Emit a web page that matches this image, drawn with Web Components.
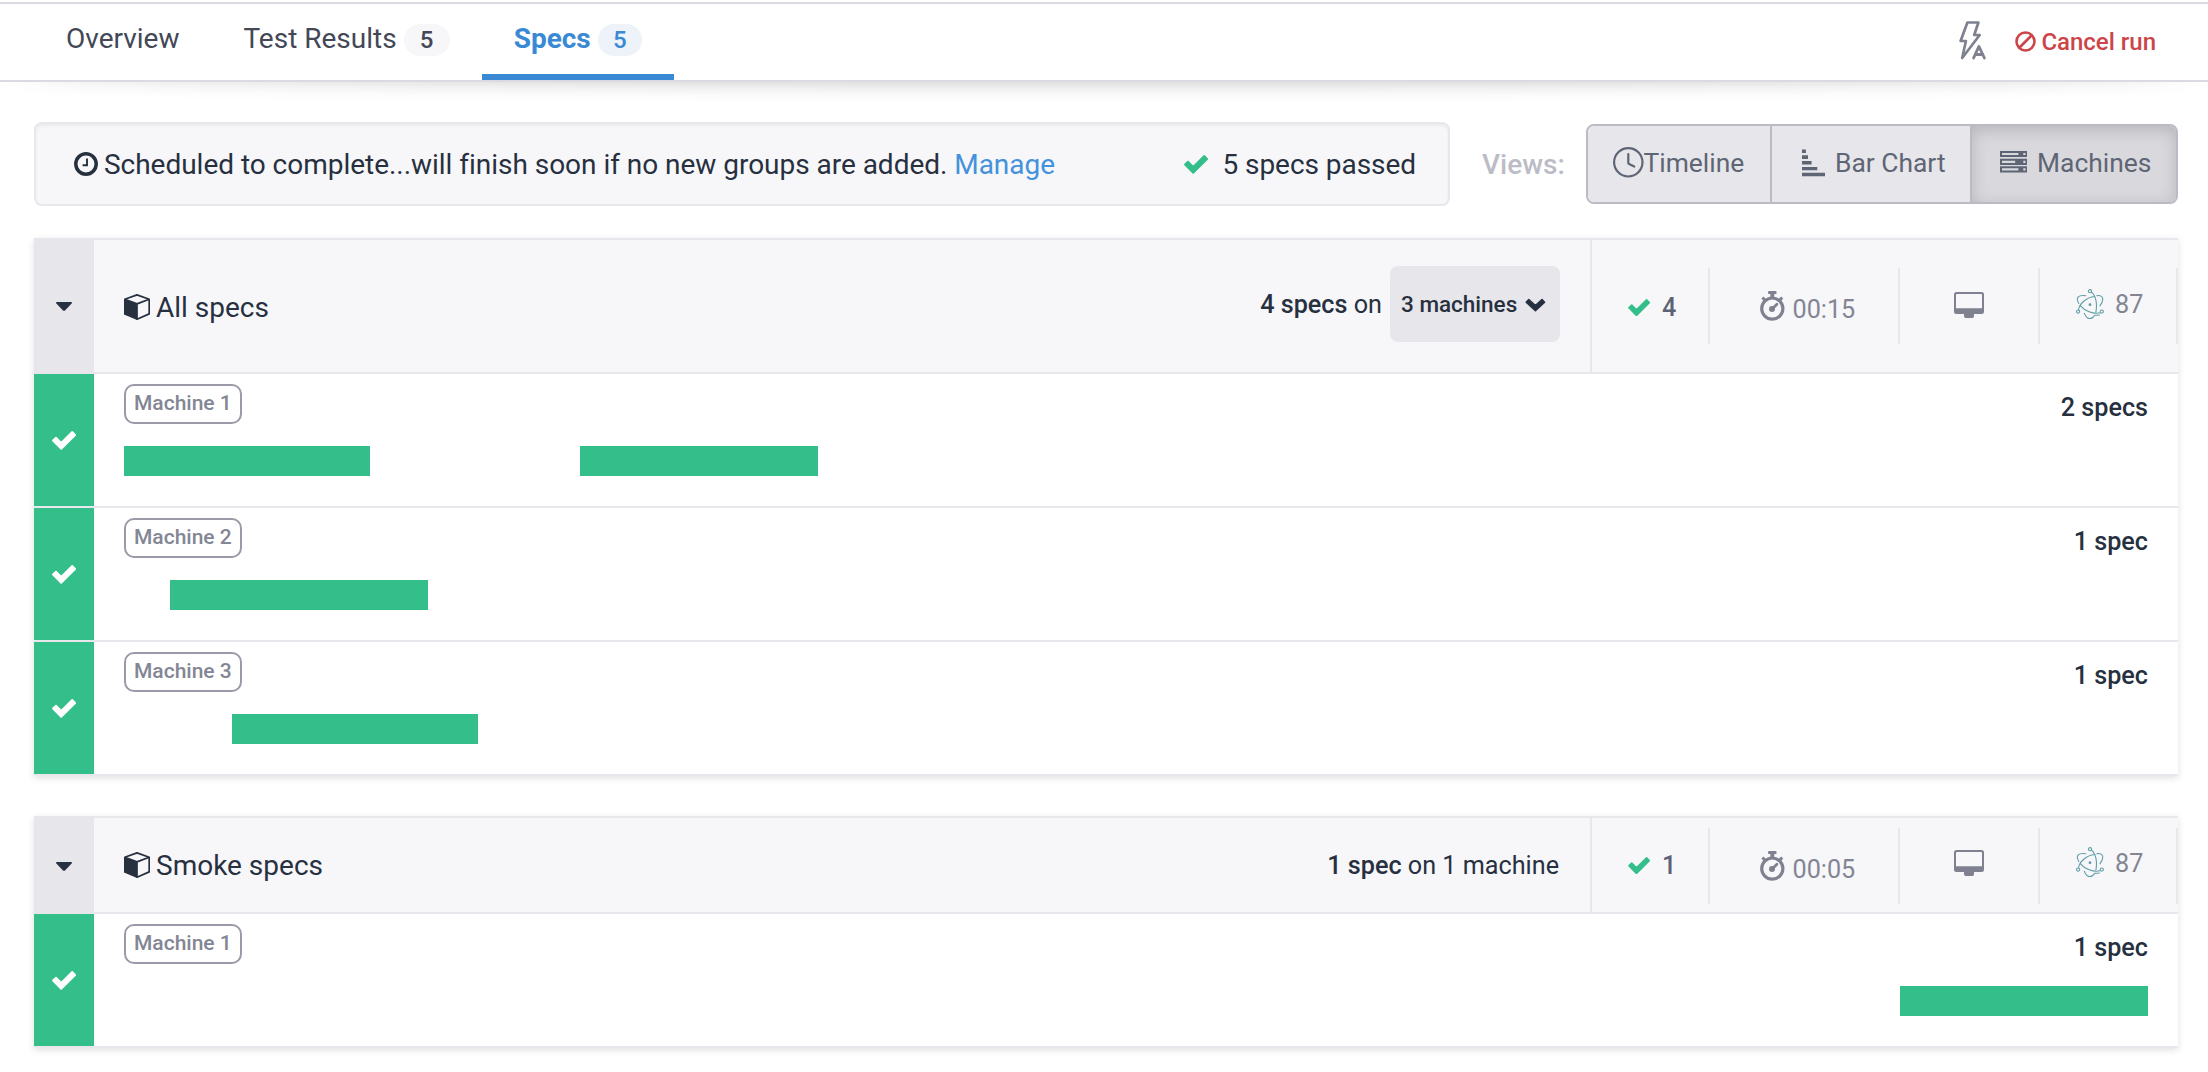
<!DOCTYPE html>
<html lang="en">
<head>
<meta charset="utf-8">
<title>Specs</title>
<style>
body{margin:0;background:#fff;color:#27303f;font-family:Roboto,"Liberation Sans",sans-serif;font-size:28px;-webkit-font-smoothing:antialiased}
</style>
</head>
<body>
<run-page></run-page>
<script>
const define=(name,html,setup)=>{
  const t=document.createElement('template');
  t.innerHTML=html;
  customElements.define(name,class extends HTMLElement{
    constructor(){super();this.attachShadow({mode:'open'}).append(t.content.cloneNode(true));}
    connectedCallback(){if(setup)setup(this,this.shadowRoot);}
  });
};
const icons={
  check:[24,19,'<path fill="currentColor" stroke="currentColor" stroke-width="1.8" stroke-linejoin="round" d="M1 9.5 4 6.6l5.2 5.3L20.2 1l2.9 3L9.2 17.9z"/>'],
  chevron:[21,14,'<path fill="currentColor" stroke="currentColor" stroke-width="1.6" stroke-linejoin="round" d="M1.2 4.2 3.8 1.5l6.6 6 6.6-6 2.6 2.7-9.2 8.4z"/>'],
  caret:[16,9,'<path fill="currentColor" d="M1 0h14q1.6 0 .6 1.4L9 8.4q-1 .9-2 0L.4 1.4Q-.6 0 1 0z"/>'],
  clock:[24,24,'<circle cx="12" cy="12" r="10.2" fill="none" stroke="currentColor" stroke-width="3.5"/><path d="M13 6.5v6.8H8.6" fill="none" stroke="currentColor" stroke-width="1.9"/>'],
  time:[31,31,'<circle cx="15.3" cy="15.3" r="14.2" fill="none" stroke="currentColor" stroke-width="2.2"/><path d="M15.3 7.2v8.6q0 .9.9 1.3l5 2.5" fill="none" stroke="currentColor" stroke-width="2.2" stroke-linecap="round"/>'],
  bars:[23,28,'<path fill="currentColor" d="M0 .6h3.9v3.3H0zM0 6.3h6V10H0zM0 12h9.6v3.5H0zM0 17.9h15.3v3.4H0zM0 23.7h23V27.200H0z"/>'],
  servers:[27,22,'<path fill="currentColor" fill-rule="evenodd" d="M0 0h27v6.100H0zm2 2v2h16.400V2zm21.300 0v2.100h2.200V2zM0 7.700h27v6.200H0zm2 2v2.200h13.200V9.700zm21.300 0v2.200h2.200V9.700zM0 15.300h27v6.100H0zm2 2v2.100h16.400v-2.100zm21.300 0v2.100h2.200v-2.100z"/>'],
  ban:[21,21,'<circle cx="10.500" cy="10.500" r="9" fill="none" stroke="currentColor" stroke-width="2.600"/><path d="M4.500 16.500l12-12" stroke="currentColor" stroke-width="2.600"/>'],
  bolt:[28,39,'<g fill="none" stroke="currentColor" stroke-width="2.700" stroke-linejoin="round" stroke-linecap="round"><path d="M8.400 1.500h11L15.200 14h5.500L3.200 37l3.700-17H1.600z"/><path stroke-width="2.800" d="M14.600 37l5.300-11.600L25.400 37M16.300 33.500h7.600"/></g>'],
  cube:[26,26,'<path fill="currentColor" d="M0 5.300 13 9.800V26L0 20.400z"/><path fill="none" stroke="currentColor" stroke-width="1.700" stroke-linejoin="round" d="M.8 5.300 13 .9l12.200 4.400v14.600L13 25.200V9.900zM13 9.900l12.200-4.600"/>'],
  stopwatch:[25,30,'<circle cx="12.300" cy="17.600" r="10.600" fill="none" stroke="currentColor" stroke-width="3.200"/><path fill="currentColor" d="M9 0h6.600q.9 0 .9.900v1.300q0 .9-.9.900H14.300V7H10.300V3.100H9q-.9 0-.9-.900V.9Q8.100 0 9 0zM1.400 7.500l2-2 3.300 3.200-2.400 2.400zM23.200 7.500l-2-2-3.300 3.200 2.400 2.400z"/><circle cx="12" cy="18" r="3" fill="currentColor"/><path d="M12.300 17.700l4.600-4.400" stroke="currentColor" stroke-width="2.800" stroke-linecap="round"/>'],
  monitor:[30,26,'<path fill="currentColor" fill-rule="evenodd" d="M2.500 0h25Q30 0 30 2.500v17q0 2.500-2.500 2.500H20v2q0 2-1.500 2h-7Q10 26 10 24v-2H2.500Q0 22 0 19.500v-17Q0 0 2.500 0zM2 2.800v13.400h26V2.800q0-.8-.8-.8H2.800q-.8 0-.8.800z"/>'],
  electron:[28,30,'<g fill="none" stroke="currentColor" stroke-width="1.100" stroke-linecap="round"><circle cx="14" cy="2.200" r="1.600"/><circle cx="2.100" cy="22.600" r="1.600"/><circle cx="25.800" cy="22.600" r="1.600"/><path d="M15.500 3.200C20 6.500 21.400 15 19.900 23M9.800 6.700C2.500 5.500-.8 8.700 2.800 14.500M2.600 20.600C3.400 14.300 11 8.200 18.600 7.500M4 16.300C8.500 21.700 17 25.500 24.200 23.800M21 6.600c6.300-.6 7.600 4.200 2.900 10.200M8.300 24.200C10.500 30.800 15.700 31.300 18.700 26.300q2.700 0 4.800-.3"/></g><circle cx="14" cy="15.700" r="1.400" fill="currentColor"/>']
};
define('ui-icon','',(h,r)=>{
  const [w,ht,body]=icons[h.getAttribute('name')],k=+(h.getAttribute('scale')||1);
  r.innerHTML=`<style>:host{display:block;flex:none}svg{display:block}</style><svg width="${w*k}" height="${ht*k}" viewBox="0 0 ${w} ${ht}">${body}</svg>`;
});
const placeIcon=(r,name,scale,tint)=>{
  const i=document.createElement('ui-icon');
  i.setAttribute('name',name);
  if(scale)i.setAttribute('scale',scale);
  if(tint)i.style.color=tint;
  r.querySelector('i').replaceWith(i);
};
define('nav-tab',`<style>
:host{display:flex;box-sizing:border-box;height:76px;padding:16px 32px 0;gap:7px;color:#434857;white-space:nowrap;border-bottom:6px solid transparent}
.label{line-height:38px}
.count{box-sizing:border-box;height:32px;margin-top:4px;min-width:46px;border-radius:16px;background:#f7f7fa;font-size:24px;font-weight:500;line-height:32px;text-align:center}
:host([active]){color:#3989d4;border-color:#3989d4}
:host([active]) .label{font-weight:700}
:host([active]) .count{background:#eef3f9;min-width:44px}
</style><span class="label"><slot></slot></span>`,(h,r)=>{
  if(h.hasAttribute('count')){const c=document.createElement('span');c.className='count';c.textContent=h.getAttribute('count');r.append(c);}
});
define('run-nav',`<style>
:host{display:block;padding-top:2px;height:120px;box-sizing:border-box}
nav{display:flex;align-items:flex-start;box-sizing:border-box;height:80px;border-top:2px solid #dadae2;border-bottom:2px solid #dadae2;padding:0 52px 0 34px;background:#fff}
.tabs{display:flex;flex:1}
.actions{display:flex;color:#7f8190}
.actions ui-icon.bolt{margin-top:17px}
.cancel{display:flex;gap:5px;margin-left:28px;color:#cb4549;font-size:24px;font-weight:500;line-height:36px;margin-top:20px;white-space:nowrap}
.cancel ui-icon{margin-top:7px}
.shade{height:22px;overflow:hidden;padding:0 22px}
.shade i{display:block;height:20px;margin-top:-20px;border-radius:50%;box-shadow:0 0 20px rgba(0,0,0,.25)}
</style><nav><div class="tabs"><slot></slot></div><div class="actions"><ui-icon class="bolt" name="bolt"></ui-icon><div class="cancel"><ui-icon name="ban"></ui-icon>Cancel run</div></div></nav><div class="shade"><i></i></div>`);
define('view-button',`<style>
:host{display:flex;box-sizing:border-box;height:76px;width:var(--w);padding-left:var(--pl);gap:var(--gap,10px);border-left:2px solid #bbbbc5;font-size:26.400px;line-height:74px;color:#5e6574;background:#e7e6eb;white-space:nowrap}
:host(:first-child){border-left:0;border-radius:6px 0 0 6px}
:host([active]){background:#d9d8dd;border-radius:0 6px 6px 0;box-shadow:inset 0 4px 16px rgba(0,0,0,.16)}
ui-icon{margin-top:var(--it)}
</style><i></i><slot></slot>`,(h,r)=>placeIcon(r,h.getAttribute('icon')));
define('run-toolbar',`<style>
:host{display:flex;align-items:center;margin:2px 30px 0 34px;height:84px}
.status{display:flex;box-sizing:border-box;width:1416px;height:84px;padding:0 32px 0 38px;border:2px solid #e7e7ec;border-radius:8px;background:#f7f7fa;box-shadow:inset 0 2px 3px rgba(0,0,0,.05);line-height:82px;white-space:nowrap}
.status ui-icon.c{margin:28px 6px 0 0}
.msg{flex:1;letter-spacing:-.028px}
a{color:#4392db}
.ok{margin:31px 14px 0 0;color:#34be8a}
.passed{letter-spacing:-.050px}
.views{margin-left:32px;width:104px;font-size:28px;font-weight:500;color:#bcbcc7}
.group{display:flex;box-sizing:border-box;width:592px;height:80px;border:2px solid #bbbbc5;border-radius:8px}
</style>
<div class="status"><ui-icon class="c" name="clock"></ui-icon><span class="msg">Scheduled to complete...will finish soon if no new groups are added. <a>Manage</a></span><ui-icon class="ok" name="check"></ui-icon><span class="passed">5 specs passed</span></div>
<span class="views">Views:</span>
<div class="group">
<view-button icon="time" style="--w:182px;--pl:24.500px;--gap:-1px;--it:21px">Timeline</view-button>
<view-button icon="bars" style="--w:200px;--pl:30px;--it:23px">Bar Chart</view-button>
<view-button icon="servers" active style="--w:206px;--pl:28px;--it:25px">Machines</view-button>
</div>`);
define('group-stat',`<style>
:host{display:flex;box-sizing:border-box;height:76px;border-right:2px solid #e7e7ec;width:var(--w);padding-left:var(--pl);gap:var(--gap,11px);font-size:25.200px;color:#838593;white-space:nowrap}
ui-icon{margin-top:var(--it)}
.t{line-height:38px;margin-top:var(--tt)}
:host([strong]) .t{font-weight:500;color:#5e6374}
</style><i></i><span class="t"><slot></slot></span>`,(h,r)=>placeIcon(r,h.getAttribute('icon'),h.getAttribute('scale'),h.getAttribute('tint')||'#7f8190'));
define('spec-group',`<style>
:host{display:block;margin:0 30px 40px 34px;box-shadow:0 2px 7px rgba(0,0,0,.13)}
header{display:flex;box-sizing:border-box;height:var(--h);border-bottom:2px solid #e7e7ec;background:#f7f7fa}
.toggle{display:flex;flex:none;align-items:center;justify-content:center;width:60px;margin-bottom:-2px;padding-top:var(--caret);box-sizing:border-box;background:#e7e6eb}
.main{display:flex;flex:1;align-items:center;border-top:2px solid #e7e7ec;padding:0 31px 0 30px}
.title{display:flex;flex:1;gap:6px;height:37px;line-height:36px;margin-bottom:var(--up);white-space:nowrap}
.title ui-icon{margin-top:6px}
.title span{margin-top:2px}
.on{display:flex;align-items:center;gap:8px;font-size:25.200px;margin-bottom:var(--onup);white-space:nowrap}
.stats{display:flex;align-items:center;border-left:2px solid #e7e7ec;border-top:2px solid #e7e7ec;box-sizing:border-box;padding-top:var(--sp);width:588px}
</style><header><div class="toggle"><ui-icon name="caret"></ui-icon></div><div class="main"><div class="title"><ui-icon name="cube"></ui-icon><span></span></div><div class="on"><slot name="summary"></slot></div></div><div class="stats"><slot name="stats"></slot></div></header><slot></slot>`,(h,r)=>{r.querySelector('.title span').textContent=h.getAttribute('label');});
define('machine-select',`<style>:host{display:flex;box-sizing:border-box;width:170px;height:76px;margin-right:-1px;padding:0 0 0 11px;gap:8px;align-items:center;border-radius:8px;background:#e7e6eb;font-weight:500;font-size:22.500px}ui-icon{margin-top:2px}</style><slot></slot><ui-icon name="chevron"></ui-icon>`);
define('machine-row',`<style>
:host{display:flex;height:132px;border-bottom:2px solid #e7e7ec;background:#fff}
.state{display:flex;align-items:center;justify-content:center;width:60px;background:#34be8a;color:#fff}
.body{flex:1;padding:10px 30px 0}
.top{display:flex;justify-content:space-between;height:62px}
.name{box-sizing:border-box;height:40px;min-width:118px;padding-left:8px;border:2px solid #9c9aa9;border-radius:10px;font-size:21px;font-weight:500;line-height:34px;color:#838694}
.count{font-size:25.200px;font-weight:500;line-height:48px}
.track{display:flex}
</style><div class="state"><ui-icon name="check"></ui-icon></div><div class="body"><div class="top"><span class="name"></span><span class="count"></span></div><div class="track"><slot></slot></div></div>`,(h,r)=>{
  r.querySelector('.name').textContent=h.getAttribute('name');
  r.querySelector('.count').textContent=h.getAttribute('specs');
});
define('spec-bar','<style>:host{display:block;flex:none;height:30px;background:#34be8a}</style>',h=>{
  h.style.marginLeft=h.getAttribute('wait')+'px';h.style.width=h.getAttribute('run')+'px';
});
const stats=(n,t,o)=>`
<group-stat slot="stats" strong icon="check" scale=".92" tint="#34be8a" style="--w:118px;--pl:36px;--gap:12px;--it:${31+o}px;--tt:${21+o}px">${n}</group-stat>
<group-stat slot="stats" icon="stopwatch" style="--w:190px;--pl:49.500px;--gap:8px;--it:23px;--tt:23px">${t}</group-stat>
<group-stat slot="stats" icon="monitor" style="--w:140px;--pl:54px;--it:${24+o}px;--tt:0px"></group-stat>
<group-stat slot="stats" icon="electron" tint="#5f9ea6" style="--w:138px;--pl:36px;--it:${21+o}px;--tt:${o?17:17.500}px">87</group-stat>`;
define('run-page',`<style>:host{display:block}main{display:block}.groups{padding-top:32px}[slot=summary] {white-space:nowrap}b{font-weight:500}</style>
<run-nav><nav-tab>Overview</nav-tab><nav-tab count="5">Test Results</nav-tab><nav-tab active count="5">Specs</nav-tab></run-nav>
<main><run-toolbar></run-toolbar>
<div class="groups">
<spec-group label="All specs" style="--h:136px;--up:0px;--onup:4px;--caret:1px;--sp:0px"><span slot="summary"><b>4 specs</b> on</span><machine-select slot="summary">3 machines</machine-select>${stats(4,'00:15',0)}
<machine-row name="Machine 1" specs="2 specs"><spec-bar wait="0" run="246"></spec-bar><spec-bar wait="210" run="238"></spec-bar></machine-row>
<machine-row name="Machine 2" specs="1 spec"><spec-bar wait="46" run="258"></spec-bar></machine-row>
<machine-row name="Machine 3" specs="1 spec"><spec-bar wait="108" run="246"></spec-bar></machine-row></spec-group>
<spec-group label="Smoke specs" style="--h:98px;--up:2px;--onup:0px;--caret:3px;--sp:2px"><span slot="summary"><b>1 spec</b> on 1 machine</span>${stats(1,'00:05',-2)}
<machine-row name="Machine 1" specs="1 spec"><spec-bar wait="1776" run="248"></spec-bar></machine-row></spec-group>
</div></main>`);
</script>
</body>
</html>
